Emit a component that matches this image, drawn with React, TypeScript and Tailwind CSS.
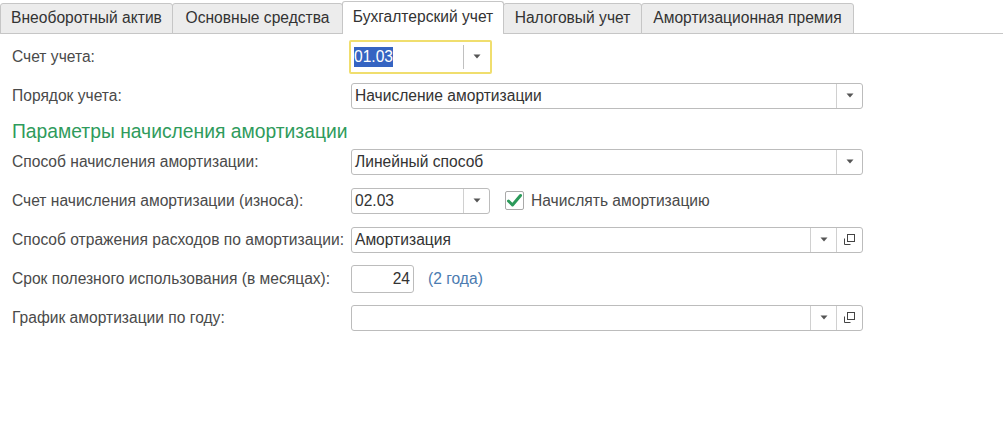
import React from "react";

const font = { fontFamily: '"Liberation Sans", Arial, sans-serif' };

const tabs = [
  { title: "Внеоборотный актив", w: "w-[173px]" },
  { title: "Основные средства", w: "w-[171px]" },
  { title: "Бухгалтерский учет", w: "w-[162px]", active: true },
  { title: "Налоговый учет", w: "w-[139px]" },
  { title: "Амортизационная премия", w: "w-[213px]" },
];

const Arrow = () => (
  <svg width="8" height="5" viewBox="0 0 8 5">
    <path d="M0.5 0.5 H7.5 L4 4.5 Z" fill="#555" />
  </svg>
);

const OpenIcon = () => (
  <svg width="13" height="13" viewBox="0 0 13 13" fill="none" stroke="#444" strokeWidth="1">
    <rect x="4.5" y="1.5" width="7" height="7" />
    <path d="M1.5 5.5 V11.5 H7.5" />
  </svg>
);

function Field({
  value,
  width,
  dropdown = true,
  open = false,
}: {
  value?: string;
  width: string;
  dropdown?: boolean;
  open?: boolean;
}) {
  return (
    <div
      className={`flex h-[26px] ${width} items-stretch rounded-[3px] border border-[#bcbcbc] bg-white`}
    >
      <div className="flex flex-1 items-center px-[3px] text-[15.6px] text-[#333]">{value}</div>
      {dropdown && (
        <div className="flex w-[26px] items-center justify-center border-l border-[#d0d0d0]">
          <Arrow />
        </div>
      )}
      {open && (
        <div className="flex w-[26px] items-center justify-center border-l border-[#d0d0d0]">
          <OpenIcon />
        </div>
      )}
    </div>
  );
}

function Row({ label, children }: { label: string; children: React.ReactNode }) {
  return (
    <div className="flex h-[39px] items-center">
      <div className="w-[339px] shrink-0 text-[15.6px] text-[#4a4a4a]">{label}</div>
      {children}
    </div>
  );
}

export default function App() {
  return (
    <div className="h-[425px] w-[1003px] bg-white" style={font}>
      <div className="flex h-[34px] items-end border-b border-[#c6c6c6]">
        {tabs.map((t, i) =>
          t.active ? (
            <div
              key={t.title}
              className={`${t.w} -mb-px ${i ? "-ml-px" : ""} flex h-[33px] items-center justify-center rounded-t-[3px] border border-b-0 border-[#c6c6c6] bg-white pb-[3px] text-[15.6px] text-[#333]`}
            >
              {t.title}
            </div>
          ) : (
            <div
              key={t.title}
              className={`${t.w} -mb-px ${i ? "-ml-px" : ""} flex h-[31px] items-center justify-center rounded-t-[3px] border border-[#c6c6c6] bg-[#ececec] pb-px text-[15.6px] text-[#333]`}
            >
              {t.title}
            </div>
          )
        )}
      </div>

      <div className="pl-[12px] pt-[3px]">
        <Row label="Счет учета:">
          <div className="-ml-[2px] flex h-[34px] w-[143px] items-stretch rounded-[2px] border-2 border-[#f0de6e] bg-white">
            <div className="flex flex-1 items-center pl-[3px] text-[15.6px]">
              <span className="bg-[#3564c2] leading-[20px] text-white">01.03</span>
            </div>
            <div className="my-[3px] flex w-[27px] items-center justify-center border-l border-[#c0c0c0]">
              <Arrow />
            </div>
          </div>
        </Row>
        <Row label="Порядок учета:">
          <Field value="Начисление амортизации" width="w-[512px]" />
        </Row>
        <div className="h-[27px] pt-[7px] text-[19.3px] leading-[20px] text-[#2f9b5c]">
          Параметры начисления амортизации
        </div>
        <Row label="Способ начисления амортизации:">
          <Field value="Линейный способ" width="w-[512px]" />
        </Row>
        <Row label="Счет начисления амортизации (износа):">
          <Field value="02.03" width="w-[139px]" />
          <div className="ml-[15px] flex items-center">
            <div className="flex h-[19px] w-[19px] items-center justify-center rounded-[2px] border border-[#a9a9a9] bg-white">
              <svg width="17" height="15" viewBox="0 0 17 15">
                <path
                  d="M2.5 8 L6.5 12 L14.5 2.5"
                  fill="none"
                  stroke="#2b9a5a"
                  strokeWidth="3"
                  strokeLinecap="round"
                  strokeLinejoin="round"
                />
              </svg>
            </div>
            <span className="ml-[7px] text-[15.6px] text-[#4a4a4a]">Начислять амортизацию</span>
          </div>
        </Row>
        <Row label="Способ отражения расходов по амортизации:">
          <Field value="Амортизация" width="w-[512px]" open />
        </Row>
        <Row label="Срок полезного использования (в месяцах):">
          <div className="flex h-[28px] w-[63px] items-center justify-end rounded-[3px] border border-[#bcbcbc] bg-white pr-[3px] text-[15.6px] text-[#333]">
            24
          </div>
          <span className="ml-[14px] text-[15.6px] text-[#4b7bb0]">(2 года)</span>
        </Row>
        <Row label="График амортизации по году:">
          <Field width="w-[512px]" open />
        </Row>
      </div>
    </div>
  );
}
